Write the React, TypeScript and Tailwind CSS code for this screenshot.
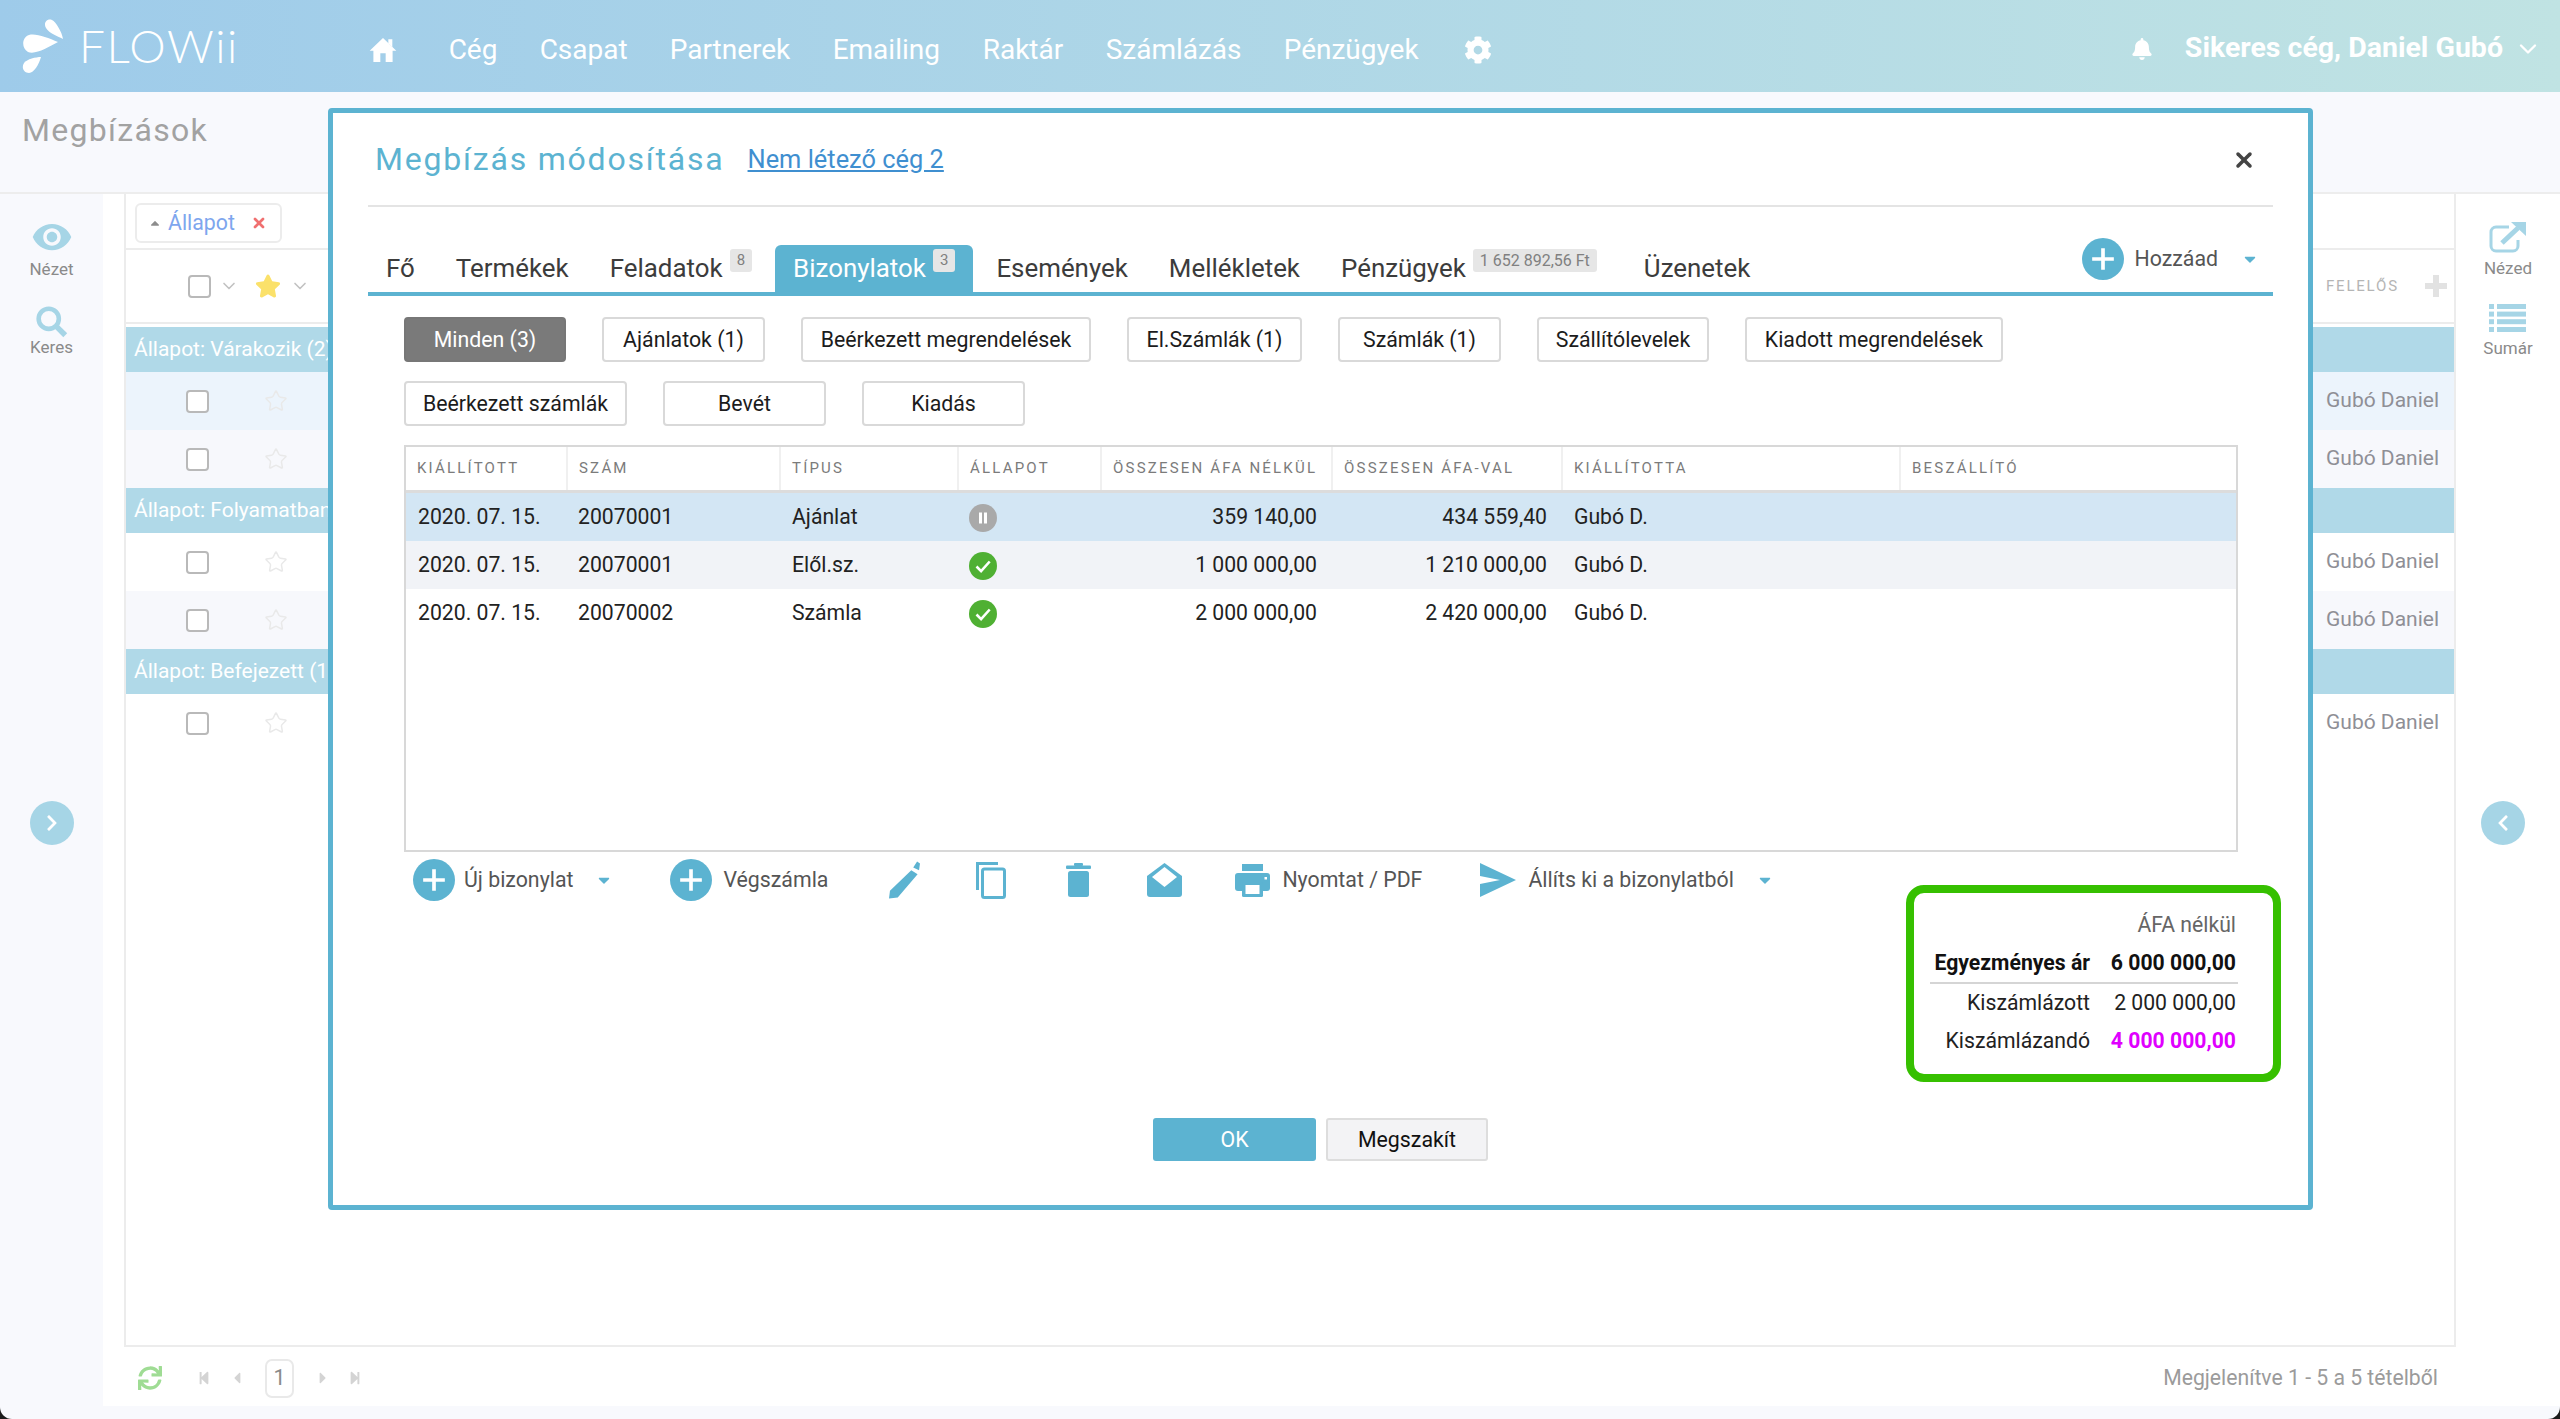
import { ChevronDown, Star, X } from "lucide-react";
import {
  FaBell,
  FaCaretDown,
  FaCaretUp,
  FaCog,
  FaStar,
  FaStepBackward,
  FaStepForward,
  FaSync,
  FaCaretLeft,
  FaCaretRight,
  FaChevronLeft,
  FaChevronRight,
} from "react-icons/fa";
import { MdVisibility } from "react-icons/md";

const NAV = [
  { label: "Cég", w: "w-[91px]" },
  { label: "Csapat", w: "w-[130px]" },
  { label: "Partnerek", w: "w-[163px]" },
  { label: "Emailing", w: "w-[150px]" },
  { label: "Raktár", w: "w-[123px]" },
  { label: "Számlázás", w: "w-[178px]" },
  { label: "Pénzügyek", w: "w-[180px]" },
];

const FILTERS_TOP = [
  { label: "Minden (3)", w: "w-[162px]", active: true },
  { label: "Ajánlatok (1)", w: "w-[163px]" },
  { label: "Beérkezett megrendelések", w: "w-[290px]" },
  { label: "El.Számlák (1)", w: "w-[175px]" },
  { label: "Számlák (1)", w: "w-[163px]" },
  { label: "Szállítólevelek", w: "w-[172px]" },
  { label: "Kiadott megrendelések", w: "w-[258px]" },
];

const FILTERS_BOTTOM = [
  { label: "Beérkezett számlák", w: "w-[223px]" },
  { label: "Bevét", w: "w-[163px]" },
  { label: "Kiadás", w: "w-[163px]" },
];

const COLUMNS = [
  "Kiállított",
  "Szám",
  "Típus",
  "Állapot",
  "Összesen ÁFA nélkül",
  "Összesen ÁFA-val",
  "Kiállította",
  "Beszállító",
];

const ROWS = [
  { date: "2020. 07. 15.", no: "20070001", type: "Ajánlat", paused: true, net: "359 140,00", gross: "434 559,40", bg: "bg-[#d3e6f4]" },
  { date: "2020. 07. 15.", no: "20070001", type: "Elől.sz.", paused: false, net: "1 000 000,00", gross: "1 210 000,00", bg: "bg-[#f1f3f7]" },
  { date: "2020. 07. 15.", no: "20070002", type: "Számla", paused: false, net: "2 000 000,00", gross: "2 420 000,00", bg: "bg-white" },
];

const GRID = "grid grid-cols-[160px_213px_178px_143px_231px_230px_338px_1fr]";

function Logo() {
  return (
    <svg viewBox="22 17 42 55" className="ml-[22px] h-[55px] w-[42px] fill-white">
      <path d="M58 40C48 36 36 31 29 33C22 35 21 46 28 50C36 53 48 45 58 40Z" />
      <path d="M63 37C62 30 56 20 52 18C47 16 43 21 46 26C49 31 57 34 63 37Z" />
      <path d="M41 55C36 55 27 57 24 61C21 66 24 71 29 71C34 71 39 62 41 55Z" />
    </svg>
  );
}

function PlusCircle({ className = "" }: { className?: string }) {
  return (
    <span className={`flex h-[42px] w-[42px] shrink-0 items-center justify-center rounded-full bg-[#5cb3d1] ${className}`}>
      <svg viewBox="0 0 24 24" className="h-[26px] w-[26px] fill-white">
        <path d="M10.3 2h3.4v8.3H22v3.4h-8.3V22h-3.4v-8.3H2v-3.4h8.3z" />
      </svg>
    </span>
  );
}

function Caret({ className = "" }: { className?: string }) {
  return <FaCaretDown className={`h-[18px] w-[18px] text-[#5cb3d1] ${className}`} />;
}

function Checkbox() {
  return <span className="block h-[23px] w-[23px] rounded-[4px] border-2 border-[#b9b9b9] bg-white" />;
}

function SideItem({ icon, label, iconBox, gap }: { icon: React.ReactNode; label: string; iconBox: string; gap: string }) {
  return (
    <div className="flex flex-col items-center">
      <div className={`flex items-center justify-center ${iconBox}`}>{icon}</div>
      <span className={`text-[17px] leading-[22px] text-[#8a8a8a] ${gap}`}>{label}</span>
    </div>
  );
}

function Band({ label }: { label: string }) {
  return (
    <div className="flex h-[45px] items-center bg-[#b0d9e8] pl-[8px] text-[21px] whitespace-nowrap text-white">
      {label}
    </div>
  );
}

function ListRow({ bg }: { bg: string }) {
  return (
    <div className={`flex h-[58px] items-center justify-between ${bg}`}>
      <div className="flex items-center pl-[60px]">
        <Checkbox />
        <Star className="ml-[55px] h-[24px] w-[24px] text-[#e9e9e9]" strokeWidth={1.5} />
      </div>
      <span className="w-[128px] text-[21px] whitespace-nowrap text-[#8f8f96]">Gubó Daniel</span>
    </div>
  );
}

function FilterButton({ label, w, active }: { label: string; w: string; active?: boolean }) {
  return (
    <button
      type="button"
      className={`flex h-[45px] items-center justify-center rounded-[4px] border-2 text-[21.3px] whitespace-nowrap ${w} ${
        active ? "border-[#777777] bg-[#7a7a7a] text-white" : "border-[#d9d9d9] bg-white text-[#1c1c1c]"
      }`}
    >
      {label}
    </button>
  );
}

function Tab({ label, badge, active, wide }: { label: string; badge?: string; active?: boolean; wide?: boolean }) {
  return (
    <div
      className={`flex h-[47px] items-center rounded-t-[6px] px-[18px] text-[25.9px] whitespace-nowrap ${
        active ? "bg-[#5cb3d1] text-white" : "text-[#3c3c3c]"
      }`}
    >
      {label}
      {badge && (
        <span
          className={`mb-[16px] ml-[7px] flex h-[23px] items-center rounded-[3px] bg-[#e6e6e6] px-[7px] text-[#808080] ${
            wide ? "mr-[6px] text-[16px]" : "text-[15px]"
          }`}
        >
          {badge}
        </span>
      )}
    </div>
  );
}

function StatusIcon({ paused }: { paused: boolean }) {
  if (paused) {
    return (
      <svg viewBox="0 0 28 28" className="mt-[2px] h-[28px] w-[28px]">
        <circle cx="14" cy="14" r="14" fill="#a9a9a9" />
        <rect x="10" y="8.5" width="3" height="11" fill="#fff" />
        <rect x="15" y="8.5" width="3" height="11" fill="#fff" />
      </svg>
    );
  }
  return (
    <svg viewBox="0 0 28 28" className="mt-[2px] h-[28px] w-[28px]">
      <circle cx="14" cy="14" r="14" fill="#4fb033" />
      <path d="M7.5 14.5l4.6 4.6 8.6-9.6" fill="none" stroke="#fff" strokeWidth="2.6" />
    </svg>
  );
}

function DocsTable() {
  return (
    <div className="h-[407px] w-[1834px] border-2 border-[#d8d8d8] bg-white">
      <div className={`${GRID} h-[46px] border-b-[3px] border-[#dcdcdc]`}>
        {COLUMNS.map((col, i) => (
          <div
            key={col}
            className={`flex items-center pl-[11px] text-[15px] tracking-[2.2px] whitespace-nowrap text-[#7b7b7b] uppercase ${
              i > 0 ? "border-l-2 border-[#f0f0f0]" : ""
            }`}
          >
            {col}
          </div>
        ))}
      </div>
      {ROWS.map((row, i) => (
        <div key={i} className={`${GRID} h-[48px] items-center text-[21.2px] whitespace-nowrap text-[#222222] ${row.bg}`}>
          <span className="pl-[12px]">{row.date}</span>
          <span className="pl-[12px]">{row.no}</span>
          <span className="pl-[13px]">{row.type}</span>
          <span className="flex pl-[12px]">
            <StatusIcon paused={row.paused} />
          </span>
          <span className="pr-[14px] text-right">{row.net}</span>
          <span className="pr-[14px] text-right">{row.gross}</span>
          <span className="pl-[13px]">Gubó D.</span>
          <span />
        </div>
      ))}
    </div>
  );
}

function Toolbar() {
  return (
    <div className="flex h-[42px] items-center text-[21.3px] whitespace-nowrap text-[#555555]">
      <PlusCircle className="ml-[9px]" />
      <span className="ml-[9px]">Új bizonylat</span>
      <Caret className="ml-[22px]" />
      <PlusCircle className="ml-[57px]" />
      <span className="ml-[11px]">Végszámla</span>
      <svg viewBox="0 0 32 38" className="ml-[61px] h-[38px] w-[31px] fill-[#5cb3d1]">
        <path d="M23 9L29.5 13 9 37 0 38 1 30zM25 6l4-6 3 2-1 7z" />
      </svg>
      <svg viewBox="0 0 30 37" className="ml-[56px] h-[37px] w-[30px]" fill="none" stroke="#5cb3d1">
        <rect x="6.5" y="7" width="22" height="28.5" rx="2" strokeWidth="3" />
        <path d="M1.5 28V1.5H22" strokeWidth="3" />
      </svg>
      <svg viewBox="0 0 25 34" className="ml-[60px] h-[34px] w-[25px] fill-[#5cb3d1]">
        <rect x="8" y="0" width="9" height="3" rx="1" />
        <rect x="0" y="2.5" width="25" height="3.5" rx="1" />
        <rect x="2" y="8" width="21" height="26" rx="2.5" />
      </svg>
      <svg viewBox="0 0 35 34" className="ml-[56px] h-[34px] w-[35px]">
        <path d="M0 13L17.5 0 35 13V31a3 3 0 0 1-3 3H3a3 3 0 0 1-3-3z" fill="#5cb3d1" />
        <path d="M17.5 4L30 14 17.5 24 5 14z" fill="#fff" />
      </svg>
      <svg viewBox="0 0 35 33" className="ml-[53px] h-[33px] w-[35px]">
        <rect x="7" y="0" width="21" height="7" fill="#5cb3d1" />
        <rect x="0" y="9" width="35" height="18" rx="3" fill="#5cb3d1" />
        <rect x="7" y="18" width="21" height="15" rx="1.5" fill="#5cb3d1" />
        <rect x="10.5" y="21" width="14" height="9" fill="#fff" />
        <rect x="29.5" y="13" width="2.5" height="2.5" fill="#fff" />
      </svg>
      <span className="ml-[12px]">Nyomtat / PDF</span>
      <svg viewBox="0 0 36 34" className="ml-[58px] h-[34px] w-[36px] fill-[#5cb3d1]">
        <path d="M0 0L36 17 0 34 0 21 20 17 0 13z" />
      </svg>
      <span className="ml-[12px]">Állíts ki a bizonylatból</span>
      <Caret className="ml-[22px]" />
    </div>
  );
}

function SummaryBox() {
  return (
    <div className="-mr-[8px] mt-[33px] h-[197px] w-[375px] rounded-[18px] border-[8px] border-[#36c000] bg-white pt-[13px] pl-[16px] text-[21.2px] leading-[38px] whitespace-nowrap">
      <div className="grid w-[308px] grid-cols-[160px_146px] text-right">
        <span />
        <span className="text-[#666666]">ÁFA nélkül</span>
      </div>
      <div className="grid w-[308px] grid-cols-[160px_146px] border-b-2 border-[#d5d5d5] text-right font-bold text-[#111111]">
        <span>Egyezményes ár</span>
        <span>6 000 000,00</span>
      </div>
      <div className="grid w-[308px] grid-cols-[160px_146px] text-right text-[#222222]">
        <span>Kiszámlázott</span>
        <span>2 000 000,00</span>
      </div>
      <div className="grid w-[308px] grid-cols-[160px_146px] text-right text-[#222222]">
        <span>Kiszámlázandó</span>
        <span className="font-bold text-[#e000ff]">4 000 000,00</span>
      </div>
    </div>
  );
}

function Modal() {
  return (
    <div className="absolute top-[108px] left-[328px] h-[1102px] w-[1985px] rounded-[4px] border-[5px] border-[#5cb3d1] bg-white px-[35px]">
      <div className="flex h-[94px] items-center border-b-2 border-[#e4e4e4] pl-[7px]">
        <span className="text-[32px] tracking-[1.8px] text-[#5cb3d1]">Megbízás módosítása</span>
        <a className="ml-[23px] text-[25.4px] text-[#3f8fd0] underline">Nem létező cég 2</a>
        <X className="mt-[2px] mr-[17px] ml-auto h-[24px] w-[24px] text-[#444444]" strokeWidth={3.5} />
      </div>

      <div className="mt-[38px] flex h-[51px] items-center justify-between border-b-4 border-[#5cb3d1]">
        <div className="flex gap-[5px]">
          <Tab label="Fő" />
          <Tab label="Termékek" />
          <Tab label="Feladatok" badge="8" />
          <Tab label="Bizonylatok" badge="3" active />
          <Tab label="Események" />
          <Tab label="Mellékletek" />
          <Tab label="Pénzügyek" badge="1 652 892,56 Ft" wide />
          <Tab label="Üzenetek" />
        </div>
        <div className="-mt-[20px] flex items-center text-[21.3px] text-[#555555]">
          <PlusCircle />
          <span className="ml-[11px]">Hozzáad</span>
          <Caret className="mr-[14px] ml-[23px]" />
        </div>
      </div>

      <div className="mt-[21px] pl-[36px]">
        <div className="flex gap-[36px]">
          {FILTERS_TOP.map((f) => (
            <FilterButton key={f.label} {...f} />
          ))}
        </div>
        <div className="mt-[19px] flex gap-[36px]">
          {FILTERS_BOTTOM.map((f) => (
            <FilterButton key={f.label} {...f} />
          ))}
        </div>
        <div className="mt-[19px]">
          <DocsTable />
        </div>
        <div className="flex items-start justify-between">
          <div className="pt-[7px]">
            <Toolbar />
          </div>
          <SummaryBox />
        </div>
      </div>

      <div className="mt-[36px] flex justify-center gap-[10px] text-[21.3px]">
        <button type="button" className="h-[43px] w-[163px] rounded-[3px] bg-[#5cb3d1] text-white">
          OK
        </button>
        <button type="button" className="h-[43px] w-[162px] rounded-[3px] border-2 border-[#dddddd] bg-[#f3f3f5] text-[#111111]">
          Megszakít
        </button>
      </div>
    </div>
  );
}

export default function App() {
  return (
    <div className="relative h-[1419px] w-[2560px] overflow-hidden bg-[#1c1c1c] font-['Roboto',sans-serif]">
      <div className="flex h-full flex-col overflow-hidden rounded-b-[12px] bg-[#f8f9fd]">
        <header className="flex h-[92px] shrink-0 items-center bg-gradient-to-r from-[#9ecbea] to-[#c0e3e3] text-[28px] text-white">
          <Logo />
          <span className="ml-[15px] font-['Lato',sans-serif] text-[46px] leading-none font-light tracking-[1.5px]">FLOWii</span>
          <svg viewBox="0 0 24 24" className="mt-[8px] ml-[128px] h-[32px] w-[32px] fill-white">
            <path d="M10 21v-6.5h4V21h5.2v-8.5H22L12 3 2 12.5h2.8V21z" />
            <path d="M16 4h3v6l-3-3z" />
          </svg>
          <nav className="mt-[8px] ml-[50px] flex">
            {NAV.map((n) => (
              <span key={n.label} className={`${n.w} whitespace-nowrap`}>
                {n.label}
              </span>
            ))}
          </nav>
          <FaCog className="mt-[8px] h-[28px] w-[28px]" />
          <FaBell className="mt-[6px] ml-auto h-[22px] w-[20px]" />
          <span className="mt-[5px] ml-[33px] text-[28.5px] font-bold whitespace-nowrap">Sikeres cég, Daniel Gubó</span>
          <ChevronDown className="mt-[5px] mr-[18px] ml-[11px] h-[28px] w-[28px]" />
        </header>

        <div className="flex h-[102px] shrink-0 items-start border-b-2 border-[#ededed] pt-[14px] pl-[22px] text-[32px] tracking-[1.3px] text-[#a2a2a2]">
          Megbízások
        </div>

        <div className="flex h-[1212px] shrink-0">
          <aside className="flex w-[103px] shrink-0 flex-col items-center pt-[23px]">
            <SideItem
              icon={<MdVisibility className="h-[42px] w-[42px] text-[#a6d5e6]" />}
              iconBox="h-[39px]"
              gap="mt-[2px]"
              label="Nézet"
            />
            <div className="mt-[25px]">
              <SideItem
                icon={
                  <svg viewBox="0 0 36 36" className="h-[33px] w-[33px]" fill="none" stroke="#a6d5e6" strokeWidth="5">
                    <circle cx="15" cy="15" r="11" />
                    <path d="M23 23l10 10" strokeWidth="6" />
                  </svg>
                }
                iconBox="h-[32px]"
                gap="-mt-[1px]"
                label="Keres"
              />
            </div>
            <div className="mt-[443px] flex h-[44px] w-[44px] items-center justify-center rounded-full bg-[#a6d5e6]">
              <FaChevronRight className="h-[18px] w-[18px] text-white" />
            </div>
          </aside>

          <main className="flex w-[2353px] shrink-0 flex-col bg-white">
            <div className="ml-[21px] h-[1153px] border-x-2 border-b-2 border-[#ececec]">
              <div className="flex h-[56px] items-center border-b-2 border-[#ececec] pl-[9px]">
                <div className="mt-[3px] flex h-[40px] w-[147px] items-center rounded-[6px] border-2 border-[#ececec] bg-white text-[21.3px] text-[#7ea6ee]">
                  <FaCaretUp className="ml-[11px] h-[14px] w-[14px] text-[#8d8d8d]" />
                  <span className="ml-[6px]">Állapot</span>
                  <X className="ml-[16px] h-[16px] w-[16px] text-[#f07070]" strokeWidth={4} />
                </div>
              </div>
              <div className="flex h-[74px] items-center justify-between border-b-2 border-[#ececec]">
                <div className="flex items-center pl-[62px]">
                  <Checkbox />
                  <ChevronDown className="ml-[8px] h-[20px] w-[20px] text-[#c2c2c2]" />
                  <FaStar className="ml-[16px] h-[26px] w-[26px] text-[#fbe16a]" />
                  <ChevronDown className="ml-[9px] h-[20px] w-[20px] text-[#c2c2c2]" />
                </div>
                <div className="flex w-[128px] items-center justify-between pr-[6px]">
                  <span className="text-[15px] tracking-[1.8px] text-[#b5b5b5]">FELELŐS</span>
                  <svg viewBox="0 0 24 24" className="h-[24px] w-[24px] fill-[#e2e2e2]">
                    <path d="M9 1h6v8h8v6h-8v8H9v-8H1V9h8z" />
                  </svg>
                </div>
              </div>
              <div className="mt-[3px] flex flex-col">
                <Band label="Állapot: Várakozik (2)" />
                <ListRow bg="bg-[#ecf4fc]" />
                <ListRow bg="bg-[#f7f8fc]" />
                <Band label="Állapot: Folyamatban (2)" />
                <ListRow bg="bg-white" />
                <ListRow bg="bg-[#f7f8fc]" />
                <Band label="Állapot: Befejezett (1)" />
                <ListRow bg="bg-white" />
              </div>
            </div>
            <div className="ml-[23px] flex h-[59px] items-center justify-between pt-[3px] pr-[18px]">
              <div className="flex items-center text-[#d4d4d4]">
                <FaSync className="ml-[12px] h-[24px] w-[24px] text-[#9fdc94]" />
                <FaStepBackward className="ml-[35px] h-[14px] w-[14px]" />
                <FaCaretLeft className="ml-[20px] h-[18px] w-[12px]" />
                <span className="ml-[22px] flex h-[39px] w-[29px] items-center justify-center rounded-[7px] border-2 border-[#e9e9e9] text-[21.3px] text-[#8a8a8a]">
                  1
                </span>
                <FaCaretRight className="ml-[23px] h-[18px] w-[12px]" />
                <FaStepForward className="ml-[19px] h-[14px] w-[14px]" />
              </div>
              <span className="text-[21.2px] text-[#9b9b9b]">Megjelenítve 1 - 5 a 5 tételből</span>
            </div>
          </main>

          <aside className="flex w-[104px] shrink-0 flex-col items-center bg-white pt-[27px]">
            <SideItem
              icon={
                <svg viewBox="0 0 38 32" className="h-[32px] w-[38px]" fill="none" stroke="#a6d5e6">
                  <path d="M20 6H7a5 5 0 0 0-5 5v14a5 5 0 0 0 5 5h17a5 5 0 0 0 5-5v-6" strokeWidth="3" />
                  <path d="M13 22L29 7" strokeWidth="5" />
                  <path d="M22 1H37V15Z" fill="#a6d5e6" stroke="none" />
                </svg>
              }
              iconBox="h-[32px]"
              gap="mt-[4px]"
              label="Nézed"
            />
            <div className="mt-[25px]">
              <SideItem
                icon={
                  <svg viewBox="0 0 37 28" className="h-[28px] w-[37px] fill-[#a6d5e6]">
                    <rect x="0" y="0" width="5" height="5" />
                    <rect x="8" y="0" width="29" height="5" />
                    <rect x="0" y="7.6" width="5" height="5" />
                    <rect x="8" y="7.6" width="29" height="5" />
                    <rect x="0" y="15.2" width="5" height="5" />
                    <rect x="8" y="15.2" width="29" height="5" />
                    <rect x="0" y="23" width="5" height="5" />
                    <rect x="8" y="23" width="29" height="5" />
                  </svg>
                }
                iconBox="h-[28px]"
                gap="mt-[5px]"
                label="Sumár"
              />
            </div>
            <div className="mt-[442px] mr-[10px] flex h-[44px] w-[44px] items-center justify-center rounded-full bg-[#a6d5e6]">
              <FaChevronLeft className="h-[18px] w-[18px] text-white" />
            </div>
          </aside>
        </div>

        <div className="h-[13px] shrink-0" />
      </div>
      <Modal />
    </div>
  );
}
